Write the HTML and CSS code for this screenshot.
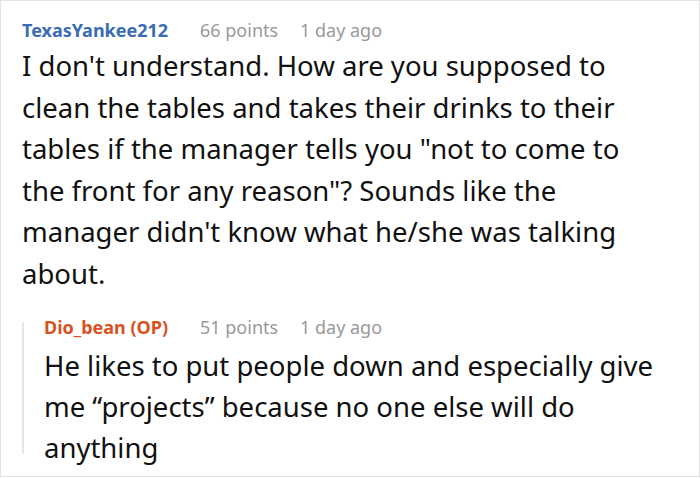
FILE: index.html
```html
<!DOCTYPE html>
<html>
<head>
<meta charset="utf-8">
<link rel="stylesheet" href="styles.css">
</head>
<body>
<div class="card">
  <div class="comment">
    <div class="meta">
      <span class="author">TexasYankee212</span>
      <span class="points">66 points</span>
      <span class="time">1 day ago</span>
    </div>
    <p class="text">I don't understand. How are you supposed to clean the tables and takes their drinks to their tables if the manager tells you "not to come to the front for any reason"? Sounds like the manager didn't know what he/she was talking about.</p>
  </div>
  <div class="reply">
    <div class="bar"></div>
    <div class="reply-body">
      <div class="meta">
        <span class="author op">Dio_bean (OP)</span>
        <span class="points">51 points</span>
        <span class="time">1 day ago</span>
      </div>
      <p class="text">He likes to put people down and especially give me “projects” because no one else will do anything</p>
    </div>
  </div>
</div>
</body>
</html>
```

FILE: styles.css
```css
html, body {
  margin: 0;
  padding: 0;
  background: #fff;
}
.card {
  box-sizing: border-box;
  width: 700px;
  height: 477px;
  border: 1px solid #e3e3e3;
  padding: 15px 39px 0 21px;
  font-family: "Noto Sans", "Open Sans", sans-serif;
  color: #111;
}
.meta {
  display: flex;
  align-items: baseline;
  font-size: 18px;
  line-height: 28px;
  white-space: nowrap;
}
.author {
  flex: none;
  font-weight: bold;
  color: #3a6bb5;
  width: 178px;
}
.author.op {
  color: #d8511f;
  width: 156px;
}
.points {
  flex: none;
  color: #999;
  width: 100px;
}
.time {
  color: #999;
}
.text {
  margin: 0;
  font-size: 27.5px;
  line-height: 41.5px;
}
.comment .text {
  margin-top: 1px;
}
.reply {
  display: flex;
  margin-top: 19px;
}
.bar {
  flex: none;
  width: 2px;
  margin: 9px 20px 14px 0;
  background: #e6e6e6;
}
.reply-body {
  flex: 1;
  min-width: 0;
}
.reply-body .text {
  margin-top: 4px;
  line-height: 41px;
}
```
